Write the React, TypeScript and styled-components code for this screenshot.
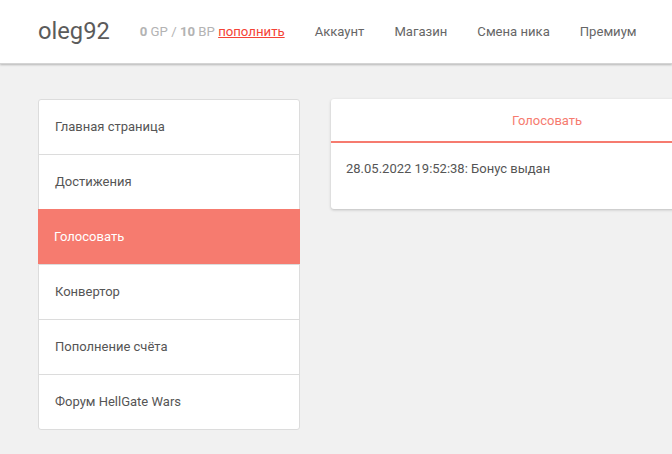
import * as React from 'react';
import styled, { createGlobalStyle } from 'styled-components';

const GlobalStyle = createGlobalStyle`
  html, body {
    margin: 0;
    padding: 0;
    background: #f1f1f1;
    font-family: Roboto, "Noto Sans", Arial, sans-serif;
    overflow: hidden;
  }
`;

const Header = styled.header`
  height: 64px;
  background: #fff;
  box-shadow: 0 1px 2px rgba(0, 0, 0, 0.25);
  border-bottom: 1px solid #d4d4d4;
  box-sizing: border-box;
  display: flex;
  align-items: center;
  padding: 0 38px;
  gap: 30px;
  white-space: nowrap;
`;

const Logo = styled.div`
  font-size: 23.7px;
  color: #5b5b5b;
  margin-bottom: 2px;
`;

const Balance = styled.div`
  font-size: 13.2px;
  color: #b3b3b3;
  b {
    font-weight: 700;
  }
`;

const TopUp = styled.a`
  color: #f44336;
  text-decoration: underline;
  cursor: pointer;
`;

const NavLink = styled.a`
  font-size: 13.1px;
  color: #666;
  cursor: pointer;
`;

const Main = styled.main`
  display: flex;
  align-items: flex-start;
  gap: 31px;
  padding: 35px 38px;
  width: 900px;
`;

const Sidebar = styled.nav`
  width: 262px;
  flex-shrink: 0;
  background: #fff;
  border: 1px solid #dcdcdc;
  border-radius: 3px;
  box-sizing: border-box;
`;

const SideItem = styled.div<{ $active?: boolean }>`
  height: 55px;
  display: flex;
  align-items: center;
  padding: 0 16px 1px;
  font-size: 13px;
  color: ${p => (p.$active ? '#fff' : '#555')};
  background: ${p => (p.$active ? '#f67b6f' : 'transparent')};
  margin: ${p => (p.$active ? '0 -1px' : '0')};
  border-top: 1px solid ${p => (p.$active ? '#f67b6f' : '#dcdcdc')};
  box-sizing: border-box;
  &:first-child {
    border-top: none;
    height: 54px;
  }
`;

const Card = styled.section`
  width: 432px;
  flex-shrink: 0;
  background: #fff;
  border-radius: 3px;
  box-shadow: 0 1px 3px rgba(0, 0, 0, 0.22);
`;

const CardTitle = styled.div`
  height: 42px;
  display: flex;
  align-items: center;
  justify-content: center;
  font-size: 13px;
  color: #f67b6f;
  border-bottom: 2px solid #f67b6f;
`;

const CardBody = styled.div`
  padding: 18px 15px 33px;
  font-size: 13px;
  color: #555;
`;

const menu = [
  'Главная страница',
  'Достижения',
  'Голосовать',
  'Конвертор',
  'Пополнение счёта',
  'Форум HellGate Wars',
];

export default function App() {
  return (
    <>
      <GlobalStyle />
      <Header>
        <Logo>oleg92</Logo>
        <Balance>
          <b>0</b> GP / <b>10</b> BP <TopUp>пополнить</TopUp>
        </Balance>
        <NavLink>Аккаунт</NavLink>
        <NavLink>Магазин</NavLink>
        <NavLink>Смена ника</NavLink>
        <NavLink>Премиум</NavLink>
      </Header>
      <Main>
        <Sidebar>
          {menu.map(m => (
            <SideItem key={m} $active={m === 'Голосовать'}>
              {m}
            </SideItem>
          ))}
        </Sidebar>
        <Card>
          <CardTitle>Голосовать</CardTitle>
          <CardBody>28.05.2022 19:52:38: Бонус выдан</CardBody>
        </Card>
      </Main>
    </>
  );
}
